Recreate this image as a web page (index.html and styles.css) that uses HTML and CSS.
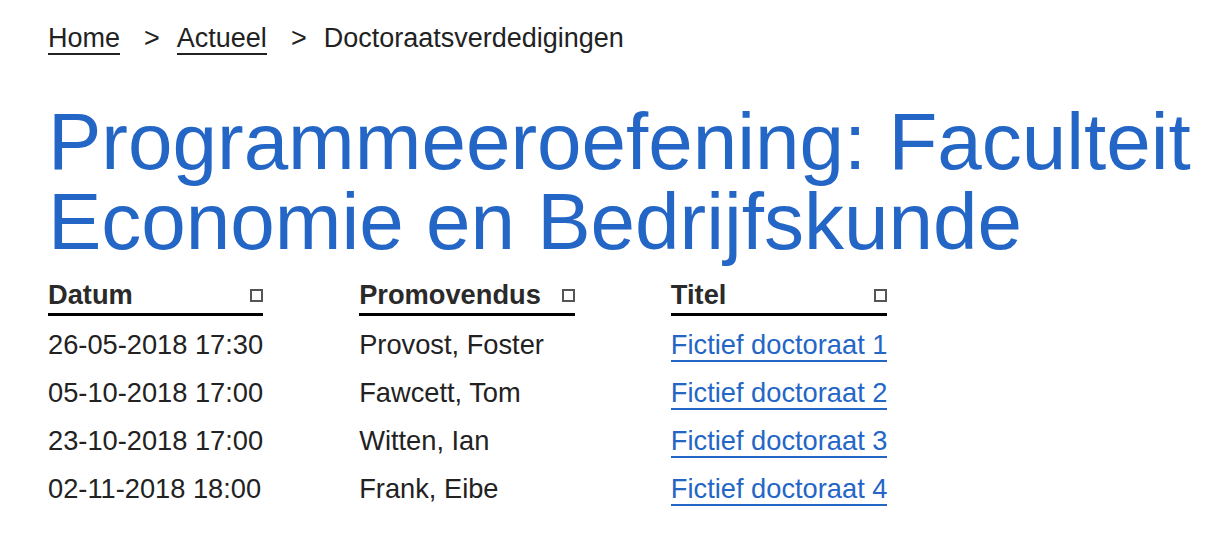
FILE: index.html
```html
<!DOCTYPE html>
<html lang="nl">
<head>
<meta charset="utf-8">
<title>Doctoraatsverdedigingen</title>
<link rel="stylesheet" href="styles.css">
</head>
<body>
<nav class="breadcrumb">
  <a class="crumb-link" href="#">Home</a>
  <span class="sep">&gt;</span>
  <a class="crumb-link" href="#">Actueel</a>
  <span class="sep">&gt;</span>
  <span class="crumb-current">Doctoraatsverdedigingen</span>
</nav>
<h1 class="title">Programmeeroefening: Faculteit Economie en Bedrijfskunde</h1>
<div class="table">
  <div class="th"><span>Datum</span><span class="sort"></span></div>
  <div class="th"><span>Promovendus</span><span class="sort"></span></div>
  <div class="th"><span>Titel</span><span class="sort"></span></div>

  <div class="td first">26-05-2018 17:30</div>
  <div class="td first">Provost, Foster</div>
  <div class="td first"><a class="link" href="#">Fictief doctoraat 1</a></div>

  <div class="td">05-10-2018 17:00</div>
  <div class="td">Fawcett, Tom</div>
  <div class="td"><a class="link" href="#">Fictief doctoraat 2</a></div>

  <div class="td">23-10-2018 17:00</div>
  <div class="td">Witten, Ian</div>
  <div class="td"><a class="link" href="#">Fictief doctoraat 3</a></div>

  <div class="td">02-11-2018 18:00</div>
  <div class="td">Frank, Eibe</div>
  <div class="td"><a class="link" href="#">Fictief doctoraat 4</a></div>
</div>
</body>
</html>
```

FILE: styles.css
```css
html, body {
  margin: 0;
  padding: 0;
  background: #ffffff;
}

body {
  padding: 23px 0 0 48px;
  font-family: "Liberation Sans", Arial, sans-serif;
  font-size: 27px;
  color: #222222;
}

.breadcrumb {
  display: flex;
  align-items: baseline;
  line-height: 30px;
}

.crumb-link {
  color: #222222;
  text-decoration: none;
  border-bottom: 2px solid #222222;
}

.sep {
  margin: 0 17px 0 24px;
}

.title {
  margin: 47px 0 0 0;
  font-size: 80px;
  line-height: 80px;
  font-weight: normal;
  color: #2466c6;
}

.table {
  display: grid;
  grid-template-columns: auto auto auto;
  justify-content: start;
  column-gap: 96px;
  margin-top: 18px;
  font-size: 27.25px;
}

.th {
  display: flex;
  align-items: center;
  justify-content: space-between;
  font-weight: bold;
  line-height: 30px;
  padding-bottom: 3px;
  border-bottom: 3px solid #000000;
  color: #2a2a2a;
}

.sort {
  width: 9px;
  height: 9px;
  margin-left: 21px;
  border: 2px solid #555555;
  background: #ffffff;
  flex: none;
}

.td {
  line-height: 48px;
  white-space: nowrap;
}

.td.first {
  margin-top: 5px;
}

.link {
  color: #2466c6;
  text-decoration: none;
  border-bottom: 2px solid #2466c6;
}
```
